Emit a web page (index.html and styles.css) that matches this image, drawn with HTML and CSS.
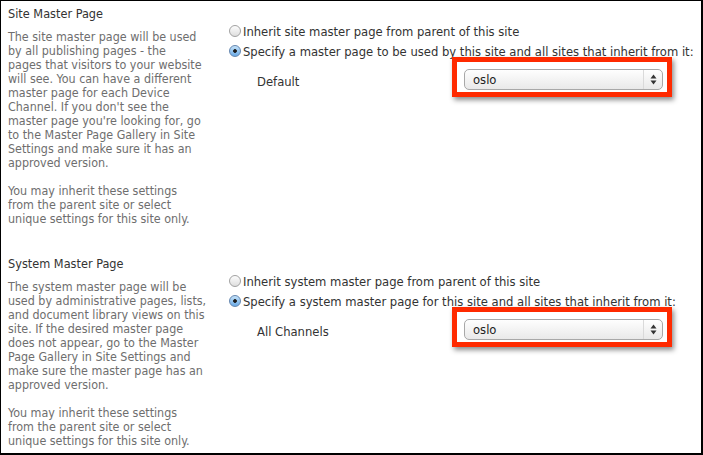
FILE: index.html
```html
<!DOCTYPE html>
<html lang="en">
<head>
    <meta charset="UTF-8">
    <meta name="viewport" content="width=device-width, initial-scale=1.0">
    <title>Master Page Settings</title>
    <link rel="stylesheet" href="styles.css">
</head>
<body>
    <div class="page">
        <div class="section">
            <div class="section-info">
                <h3>Site Master Page</h3>
                <p>The site master page will be used by all publishing pages - the pages that visitors to your website will see. You can have a different master page for each Device Channel. If you don't see the master page you're looking for, go to the Master Page Gallery in Site Settings and make sure it has an approved version.</p>
                <p class="note">You may inherit these settings from the parent site or select unique settings for this site only.</p>
            </div>
            <div class="section-options">
                <label class="option"><span class="radio"></span>Inherit site master page from parent of this site</label>
                <label class="option"><span class="radio checked"></span>Specify a master page to be used by this site and all sites that inherit from it:</label>
                <div class="channel-row">
                    <span class="channel-label">Default</span>
                    <div class="highlight">
                        <div class="select">
                            <span class="select-text">oslo</span>
                            <span class="select-arrows">
                                <svg width="7" height="11" viewBox="0 0 7 11"><path d="M0.5 4.5 L3.5 0.5 L6.5 4.5 Z M0.5 6.5 L3.5 10.5 L6.5 6.5 Z" fill="#333"/></svg>
                            </span>
                        </div>
                    </div>
                </div>
            </div>
        </div>

        <div class="section">
            <div class="section-info section-info-wide">
                <h3>System Master Page</h3>
                <p>The system master page will be used by administrative pages, lists, and document library views on this site. If the desired master page does not appear, go to the Master Page Gallery in Site Settings and make sure the master page has an approved version.</p>
                <p class="note">You may inherit these settings from the parent site or select unique settings for this site only.</p>
            </div>
            <div class="section-options">
                <label class="option"><span class="radio"></span>Inherit system master page from parent of this site</label>
                <label class="option"><span class="radio checked"></span>Specify a system master page for this site and all sites that inherit from it:</label>
                <div class="channel-row">
                    <span class="channel-label">All Channels</span>
                    <div class="highlight">
                        <div class="select">
                            <span class="select-text">oslo</span>
                            <span class="select-arrows">
                                <svg width="7" height="11" viewBox="0 0 7 11"><path d="M0.5 4.5 L3.5 0.5 L6.5 4.5 Z M0.5 6.5 L3.5 10.5 L6.5 6.5 Z" fill="#333"/></svg>
                            </span>
                        </div>
                    </div>
                </div>
            </div>
        </div>
    </div>
</body>
</html>
```

FILE: styles.css
```css
body {
    margin: 0;
    font-family: "DejaVu Sans Condensed", "DejaVu Sans", sans-serif;
    background-color: #fff;
}
.page {
    width: 703px;
    height: 455px;
    box-sizing: border-box;
    border: solid #000;
    border-width: 1px 2px 2px 1px;
    padding: 5px 7px;
    overflow: hidden;
}
.section {
    display: flex;
}
.section + .section {
    margin-top: 30px;
}
.section-info {
    width: 194px;
    margin-right: 27px;
}
.section-info-wide {
    width: 200px;
    margin-right: 21px;
}
.section-info h3 {
    margin: 0 0 8px;
    font-size: 12.6px;
    font-weight: normal;
    line-height: 16px;
    color: #333;
}
.section-info p {
    margin: 0 0 14px;
    font-size: 12.4px;
    line-height: 14px;
    color: #6e6e6e;
}
.section-info p:last-child {
    margin-bottom: 0;
}
.section-info .note {
    width: 194px;
}
.section-options {
    flex: 1;
    padding-top: 17px;
}
.option {
    display: flex;
    align-items: center;
    height: 16px;
    font-size: 12.9px;
    color: #333;
}
.option + .option {
    margin-top: 4px;
}
.radio {
    width: 12px;
    height: 12px;
    box-sizing: border-box;
    border-radius: 50%;
    border: 1px solid #a2a2a2;
    background: linear-gradient(#fdfdfd, #dedede);
    margin-right: 2px;
    flex-shrink: 0;
}
.radio.checked {
    border-color: #6587b0;
    background: radial-gradient(circle, #1c1c1c 0, #1c1c1c 1.5px, transparent 2.2px), linear-gradient(#c4e1f8, #6aaae6);
}
.channel-row {
    display: flex;
    align-items: center;
    margin-top: -2px;
    padding-left: 28px;
}
.channel-label {
    width: 195px;
    padding-top: 9px;
    font-size: 12.9px;
    color: #333;
}
.highlight {
    border: 5px solid #ff2a00;
    padding: 7px 4px 2px 7px;
    box-shadow: 2px 3px 5px rgba(0, 0, 0, 0.45);
}
.select {
    width: 199px;
    height: 21px;
    box-sizing: border-box;
    display: flex;
    align-items: center;
    border: 1px solid #a8a8a8;
    border-radius: 5px;
    background: linear-gradient(#fefefe, #e9e9e9);
    padding-left: 8px;
    font-size: 12.9px;
    color: #222;
}
.select-text {
    flex: 1;
}
.select-arrows {
    width: 18px;
    height: 100%;
    display: flex;
    align-items: center;
    justify-content: center;
    border-left: 1px solid #dadada;
}
```
